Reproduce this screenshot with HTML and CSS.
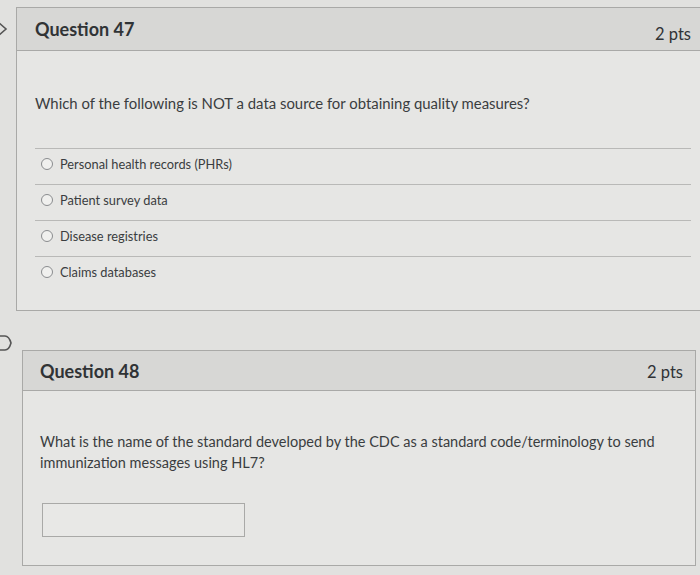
FILE: index.html
```html
<!DOCTYPE html>
<html>
<head>
<meta charset="utf-8">
<link rel="stylesheet" href="styles.css">
</head>
<body>
<div class="page">
  <svg class="toggle t1" width="10" height="20" viewBox="0 0 10 20"><path d="M-2 3 L6 10 L-2 17" fill="none" stroke="#555" stroke-width="1.6"/></svg>
  <section class="card card1">
    <header class="qhead">
      <span class="qname">Question 47</span>
      <span class="pts pts1">2 pts</span>
    </header>
    <div class="qbody body1">
      <p class="qtext">Which of the following is NOT a data source for obtaining quality measures?</p>
      <ul class="answers">
        <li class="answer"><span class="radio"></span>Personal health records (PHRs)</li>
        <li class="answer"><span class="radio"></span>Patient survey data</li>
        <li class="answer"><span class="radio"></span>Disease registries</li>
        <li class="answer"><span class="radio"></span>Claims databases</li>
      </ul>
    </div>
  </section>
  <svg class="toggle t2" width="14" height="20" viewBox="0 0 14 20"><path d="M-2 3 L5 3 Q9 3 11 10 Q9 17 5 17 L-2 17" fill="none" stroke="#555" stroke-width="1.6"/></svg>
  <section class="card card2">
    <header class="qhead head2">
      <span class="qname">Question 48</span>
      <span class="pts">2 pts</span>
    </header>
    <div class="qbody body2">
      <p class="qtext text2">What is the name of the standard developed by the CDC as a standard code/terminology to send immunization messages using HL7?</p>
      <div class="input"></div>
    </div>
  </section>
</div>
</body>
</html>
```

FILE: styles.css
```css
html, body {
  margin: 0;
  padding: 0;
}
body {
  width: 700px;
  height: 575px;
  overflow: hidden;
  background: #e1e1df;
  font-family: Lato, "Open Sans", sans-serif;
  color: #3a3d40;
}
.page {
  position: relative;
  padding-top: 7px;
}
.toggle {
  position: absolute;
  left: 0;
}
.t1 { top: 19px; }
.t2 { top: 333px; }
.card {
  background: #e6e6e4;
  border: 1px solid #a9a9a7;
  box-sizing: border-box;
}
.card1 {
  margin-left: 16px;
  width: 690px;
  height: 304px;
}
.card2 {
  margin-left: 22px;
  margin-top: 39px;
  width: 674px;
  height: 216px;
}
.qhead {
  display: flex;
  justify-content: space-between;
  align-items: center;
  height: 42px;
  background: #d7d7d5;
  border-bottom: 1px solid #a9a9a7;
  padding: 0 14px 0 18px;
  box-sizing: content-box;
}
.head2 {
  height: 39px;
  padding: 0 12px 0 17px;
}
.qname {
  font-size: 18px;
  font-weight: 700;
  color: #303336;
}
.pts {
  font-size: 16.5px;
  font-weight: 400;
  color: #303336;
  margin-top: 3px;
}
.pts1 {
  margin-top: 9px;
}
.qbody {
  padding: 0 0 0 18px;
}
.body1 {
  padding-top: 42px;
}
.qtext {
  margin: 0;
  font-size: 14.9px;
  line-height: 20px;
}
.answers {
  list-style: none;
  margin: 35px 14px 0 0;
  padding: 0;
  border-top: 1px solid #b9b9b7;
}
.answer {
  display: flex;
  align-items: center;
  height: 29px;
  padding: 0 0 6px 6px;
  box-sizing: content-box;
  border-bottom: 1px solid #b9b9b7;
  font-size: 12.8px;
}
.answer:last-child {
  border-bottom: none;
}
.radio {
  width: 10px;
  height: 10px;
  border: 1px solid #8a8c8e;
  border-radius: 50%;
  background: #f0f0ee;
  margin-right: 7px;
  flex: none;
}
.body2 {
  padding-top: 40px;
  padding-left: 17px;
  padding-right: 20px;
}
.text2 {
  font-size: 14.5px;
  line-height: 21px;
}
.input {
  margin-top: 30px;
  margin-left: 2px;
  width: 201px;
  height: 32px;
  border: 1px solid #a9a9a7;
  background: #e8e8e6;
}
```
